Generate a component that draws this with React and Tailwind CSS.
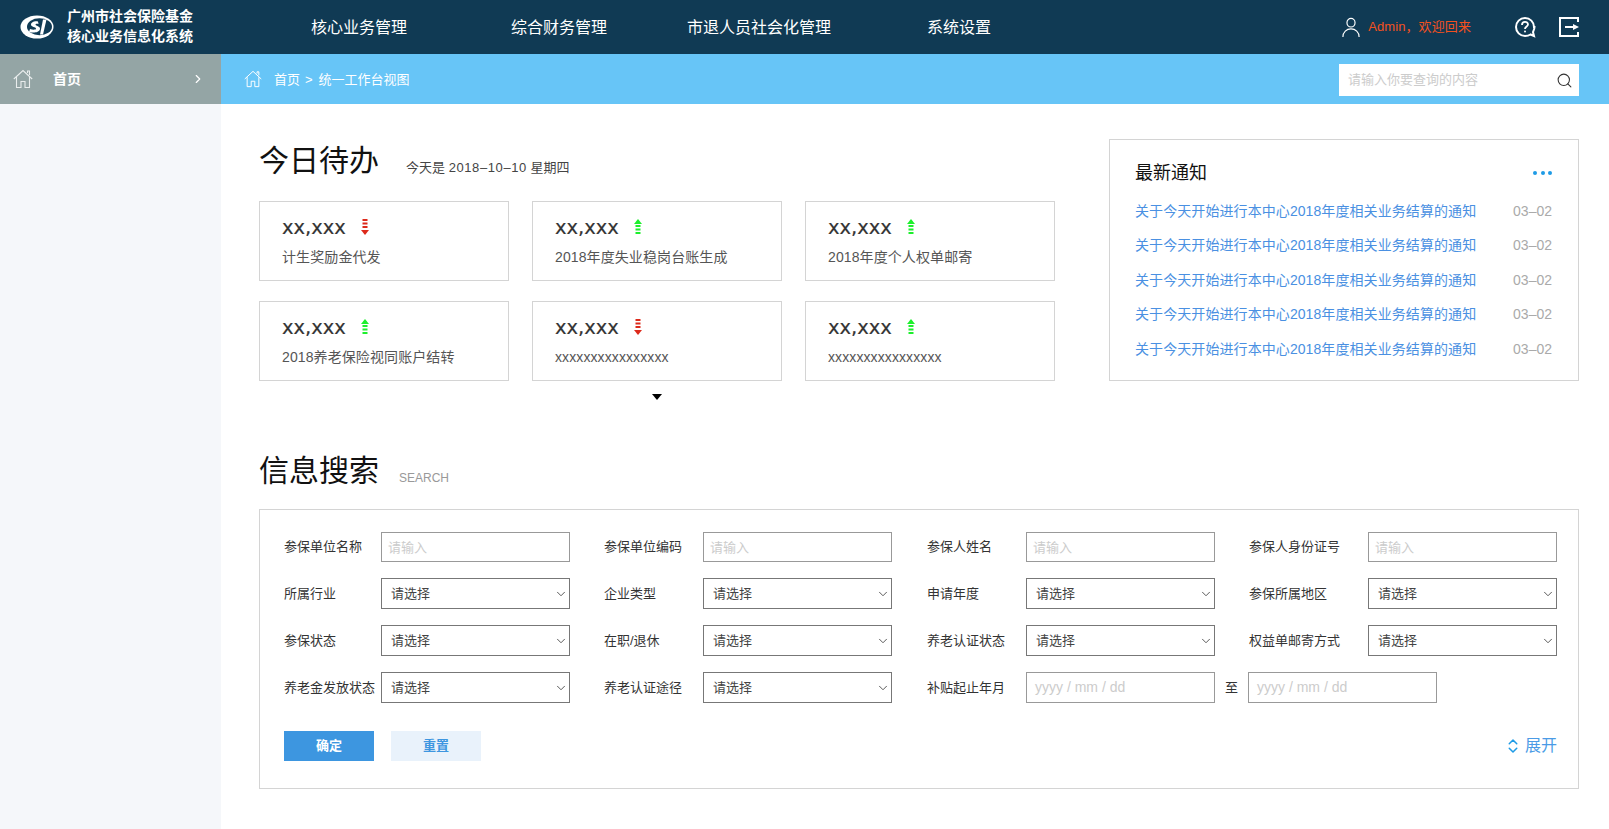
import { ChevronDown, ChevronRight, ChevronsUpDown, Search } from "lucide-react";

const font = "font-['Liberation_Sans','Noto_Sans_CJK_SC',sans-serif]";

const navItems = ["核心业务管理", "综合财务管理", "市退人员社会化管理", "系统设置"];

const todos = [
  { text: "计生奖励金代发", up: false },
  { text: "2018年度失业稳岗台账生成", up: true },
  { text: "2018年度个人权单邮寄", up: true },
  { text: "2018养老保险视同账户结转", up: true },
  { text: "xxxxxxxxxxxxxxxx", up: false },
  { text: "xxxxxxxxxxxxxxxx", up: true },
];

const labelWidths = ["w-[97px]", "w-[99px]", "w-[99px]", "w-[119px]"];

const rows = [
  [
    ["参保单位名称", "input"],
    ["参保单位编码", "input"],
    ["参保人姓名", "input"],
    ["参保人身份证号", "input"],
  ],
  [
    ["所属行业", "select"],
    ["企业类型", "select"],
    ["申请年度", "select"],
    ["参保所属地区", "select"],
  ],
  [
    ["参保状态", "select"],
    ["在职/退休", "select"],
    ["养老认证状态", "select"],
    ["权益单邮寄方式", "select"],
  ],
];

const Logo = () => (
  <svg width="34" height="26" viewBox="0 0 34 26">
    <ellipse cx="17" cy="13" rx="16.5" ry="11.5" fill="#fff" />
    <ellipse cx="19.500" cy="12.800" rx="12.500" ry="8.500" fill="#103a54" />
    <path d="M18 7.500c-3-1-7 .5-7 3 0 3 5 2 5 4 0 1.500-3 1.500-6 .5l-1 3c4 1 10 1 11-3 .5-3-4.500-3-4.500-4.500 0-1 2-1 3-.5z" fill="#fff" />
    <path d="M23 5.500l3.500 0-3.500 15-3 0z" fill="#fff" />
  </svg>
);

const HomeIcon = ({ className }) => (
  <svg className={className} viewBox="0 0 20 20" fill="none" stroke="currentColor" strokeWidth="1.100">
    <path d="M.8 10 10 1.500l9.200 8.500" />
    <path d="M3.500 8v10.500h4.500v-6h4v6h4.500V8" />
    <path d="M14.500 4V2h2v4" />
  </svg>
);

const UserIcon = () => (
  <svg width="18" height="20" viewBox="0 0 20 21" preserveAspectRatio="none" fill="none" stroke="#fff" strokeWidth="1.300">
    <circle cx="10" cy="6" r="4.500" />
    <path d="M1 21c0-5 4-8.500 9-8.500s9 3.500 9 8.500" />
  </svg>
);

const HelpIcon = () => (
  <svg width="22" height="22" viewBox="0 0 22 22" fill="none" stroke="#fff" strokeWidth="2">
    <path d="M20 11a9 9 0 1 0-9 9c2 0 4-.5 5.500-1.500l3.500 1.500-1-4c.7-1.500 1.500-3 1.500-5z" />
    <path d="M8 9c0-4 6-4 6-.5 0 2-3 2-3 4.500" strokeWidth="1.800" />
    <circle cx="11" cy="15.500" r="1" fill="#fff" stroke="none" />
  </svg>
);

const ExitIcon = () => (
  <svg width="20" height="20" viewBox="0 0 20 20" fill="none" stroke="#fff" strokeWidth="2">
    <path d="M19 5V1H1v18h18v-4" />
    <path d="M6 10h9" />
    <path d="M14 7v6l6-3z" fill="#fff" stroke="none" />
  </svg>
);

const Arrow = ({ up }) => (
  <svg width="8" height="16" viewBox="0 0 8 16" className="ml-[15px] mt-[-2px]" fill={up ? "#1cf02c" : "#dd2a1b"}>
    {up ? (
      <>
        <path d="M4 0l4 5H0z" />
        <rect x="1.500" y="6" width="5" height="2" />
        <rect x="1.500" y="9.500" width="5" height="2" />
        <rect x="1.500" y="13" width="5" height="2" />
      </>
    ) : (
      <>
        <rect x="1.500" y="0" width="5" height="2" />
        <rect x="1.500" y="3.500" width="5" height="2" />
        <rect x="1.500" y="7" width="5" height="2" />
        <path d="M4 16l4-5H0z" />
      </>
    )}
  </svg>
);

const Field = ({ label, type, labelWidth }) => (
  <div className="flex items-center">
    <span className={`${labelWidth} shrink-0 whitespace-nowrap text-[13px] text-[#333]`}>{label}</span>
    {type === "input" ? (
      <div className="flex h-[30px] w-[189px] items-center border border-[#999] px-[6px] pt-[1px] text-[13px] text-[#ccc]">请输入</div>
    ) : (
      <div className="flex h-[31px] w-[189px] items-center justify-between border border-[#777] pl-[9px] pr-[1px] text-[13px] text-[#444]">
        <span className="pt-[1px]">请选择</span>
        <ChevronDown size={14} strokeWidth={1.500} />
      </div>
    )}
  </div>
);

const DateBox = () => (
  <div className="flex h-[31px] w-[189px] items-center border border-[#999] px-[8px] text-[14px] text-[#ccc]">yyyy / mm / dd</div>
);

const App = () => {
  return (
    <div className={`flex h-[829px] w-[1609px] flex-col overflow-hidden bg-white ${font}`}>
      <div className="flex h-[54px] shrink-0 items-center bg-[#103a54] text-white">
        <div className="ml-[20px] flex w-[34px] justify-center">
          <Logo />
        </div>
        <div className="mb-[2px] ml-[13px] w-[192px] text-[14px] font-bold leading-[20px]">
          <div>广州市社会保险基金</div>
          <div>核心业务信息化系统</div>
        </div>
        <div className="mt-[2px] flex text-[16px]">
          {navItems.map((item) => (
            <div key={item} className="w-[200px] whitespace-nowrap text-center">
              {item}
            </div>
          ))}
        </div>
        <div className="ml-auto flex items-center">
          <UserIcon />
          <span className="ml-[8px] text-[13px] tracking-[0.1px] text-[#f4511e]">Admin，欢迎回来</span>
          <div className="ml-[43px]">
            <HelpIcon />
          </div>
          <div className="ml-[23px] mr-[30px]">
            <ExitIcon />
          </div>
        </div>
      </div>

      <div className="flex flex-1">
        <div className="w-[221px] shrink-0 bg-[#f5f7fa]">
          <div className="flex h-[50px] items-center bg-[#94a5a5] pl-[13px] pr-[16px] text-white">
            <HomeIcon className="h-[20px] w-[20px] opacity-80" />
            <span className="ml-[20px] text-[14px] font-bold">首页</span>
            <ChevronRight size={14} className="ml-auto" />
          </div>
        </div>

        <div className="flex min-w-0 flex-1 flex-col">
          <div className="flex h-[50px] shrink-0 items-center bg-[#67c5f7] pl-[23px] pr-[30px] text-[13px] text-white">
            <HomeIcon className="h-[18px] w-[18px]" />
            <span className="ml-[12px] pt-[2px]">首页</span>
            <span className="ml-[5px] pt-[2px]">&gt;</span>
            <span className="ml-[6px] pt-[2px]">统一工作台视图</span>
            <div className="ml-auto mt-[2px] flex h-[32px] w-[240px] items-center justify-between bg-white pl-[9px] pr-[6px] text-[13px] text-[#ccc]">
              请输入你要查询的内容
              <Search size={17} strokeWidth={1.500} className="text-[#333]" />
            </div>
          </div>

          <div className="flex pl-[38px] pr-[30px] pt-[35px]">
            <div className="w-[796px]">
              <div className="mt-[1px] flex h-[40px] items-center">
                <h1 className="text-[30px] font-normal text-[#111]">今日待办</h1>
                <span className="ml-[27px] mt-[16px] text-[13px] text-[#444]">
                  今天是 <span className="tracking-[0.6px]">2018–10–10</span> 星期四
                </span>
              </div>
              <div className="mt-[21px] grid grid-cols-3 gap-x-[23px] gap-y-[20px]">
                {todos.map((todo, i) => (
                  <div key={i} className="h-[80px] border border-[#d4d4d4] pl-[22px] pt-[14px]">
                    <div className="flex items-center font-['DejaVu_Sans',sans-serif] text-[19.500px] leading-[24px] text-[#333] [-webkit-text-stroke:0.2px_#333]">
                      xx,xxx
                      <Arrow up={todo.up} />
                    </div>
                    <div className="mt-[7px] text-[14px] leading-[20px] tracking-[0.1px] text-[#555]">{todo.text}</div>
                  </div>
                ))}
              </div>
              <div className="mt-[13px] flex justify-center">
                <div className="h-0 w-0 border-x-[5px] border-t-[6px] border-x-transparent border-t-black" />
              </div>
            </div>

            <div className="ml-[54px] h-[242px] w-[470px] border border-[#d4d4d4] pl-[25px] pr-[26px] pt-[20px]">
              <div className="flex items-center justify-between">
                <h2 className="text-[18px] font-normal leading-[26px] text-[#111]">最新通知</h2>
                <div className="flex gap-[3.500px]">
                  <span className="h-[4px] w-[4px] rounded-full bg-[#1e9be6]" />
                  <span className="h-[4px] w-[4px] rounded-full bg-[#1e9be6]" />
                  <span className="h-[4px] w-[4px] rounded-full bg-[#1e9be6]" />
                </div>
              </div>
              <div className="mt-[15px] flex flex-col gap-[14.400px]">
                {[0, 1, 2, 3, 4].map((i) => (
                  <div key={i} className="flex items-center justify-between text-[14px] leading-[20px]">
                    <span className="tracking-[0.08px] text-[#4a90e2]">关于今天开始进行本中心2018年度相关业务结算的通知</span>
                    <span className="text-[#aaa]">03–02</span>
                  </div>
                ))}
              </div>
            </div>
          </div>

          <div className="mt-[50px] flex h-[40px] items-center pl-[38px]">
            <h1 className="text-[30px] font-normal text-[#111]">信息搜索</h1>
            <span className="ml-[20px] mt-[16px] text-[12px] text-[#999]">SEARCH</span>
          </div>

          <div className="ml-[38px] mr-[30px] mt-[19px] h-[280px] border border-[#d4d4d4] pl-[24px] pr-[21px] pt-[22px]">
            <div className="grid grid-cols-[320px_323px_322px_308px] gap-y-[16px]">
              {rows.map((row) =>
                row.map(([label, type], col) => (
                  <Field key={label} label={label} type={type} labelWidth={labelWidths[col]} />
                ))
              )}
              <Field label="养老金发放状态" type="select" labelWidth={labelWidths[0]} />
              <Field label="养老认证途径" type="select" labelWidth={labelWidths[1]} />
              <div className="col-span-2 flex items-center">
                <span className="w-[99px] text-[13px] text-[#333]">补贴起止年月</span>
                <DateBox />
                <span className="mx-[10px] text-[13px] text-[#333]">至</span>
                <DateBox />
              </div>
            </div>
            <div className="mt-[28px] flex items-center">
              <button className="h-[30px] w-[90px] bg-[#3d96e0] text-[13px] font-bold text-white">确定</button>
              <button className="ml-[17px] h-[30px] w-[90px] bg-[#e9f2fb] text-[13px] font-bold text-[#3d96e0]">重置</button>
              <div className="ml-auto flex items-center text-[16px] text-[#4a9be6]">
                <ChevronsUpDown size={18} strokeWidth={2} className="text-[#1e9be6]" />
                <span className="ml-[3px]">展开</span>
              </div>
            </div>
          </div>
        </div>
      </div>
    </div>
  );
};

export default App;
